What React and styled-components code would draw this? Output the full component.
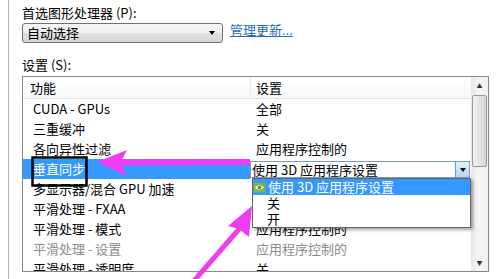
import React from 'react';
import styled, { createGlobalStyle } from 'styled-components';

const GlobalStyle = createGlobalStyle`
  body {
    margin: 0;
    background: #fff;
    font-family: "Noto Sans CJK SC", "Noto Sans", sans-serif;
  }
`;

// values of rows 5 and 6 sit under the open menu, so they stay empty
const rows = [
  { name: 'CUDA - GPUs', value: '全部' },
  { name: '三重缓冲', value: '关' },
  { name: '各向异性过滤', value: '应用程序控制的' },
  { name: '垂直同步', value: '使用 3D 应用程序设置', selected: true },
  { name: '多显示器/混合 GPU 加速', value: '' },
  { name: '平滑处理 - FXAA', value: '' },
  { name: '平滑处理 - 模式', value: '应用程序控制的' },
  { name: '平滑处理 - 设置', value: '应用程序控制的', disabled: true },
  { name: '平滑处理 - 透明度', value: '关' },
];

const options = ['使用 3D 应用程序设置', '关', '开'];

function App() {
  return (
    <Page>
      <GlobalStyle />
      <Frame>
        <Label>首选图形处理器 (P):</Label>
        <TopRow>
          <Combo>
            <span>自动选择</span>
            <Caret />
          </Combo>
          <Link>管理更新...</Link>
        </TopRow>
        <Label2>设置 (S):</Label2>
        <TableBox>
          <List>
            <Header>
              <HeadCell>功能</HeadCell>
              <HeadCell second>设置</HeadCell>
            </Header>
            {rows.map((r, i) => (
              <Row key={i}>
                <NameCell selected={r.selected} disabled={r.disabled}>{r.name}</NameCell>
                {r.selected ? (
                  <ValueCell>
                    <InlineCombo>
                      <span>{r.value}</span>
                      <DropButton><Caret /></DropButton>
                    </InlineCombo>
                    <Menu>
                      {options.map((o, j) => (
                        <MenuItem key={j} active={j === 0}>
                          {j === 0 && <NvIcon />}
                          {o}
                        </MenuItem>
                      ))}
                    </Menu>
                  </ValueCell>
                ) : (
                  <ValueCell disabled={r.disabled}>{r.value}</ValueCell>
                )}
              </Row>
            ))}
          </List>
          <Scrollbar>
            <ScrollButton>▲</ScrollButton>
            <Thumb />
            <Track />
            <ScrollButton>▼</ScrollButton>
          </Scrollbar>
        </TableBox>
      </Frame>
      <Annotations />
    </Page>
  );
}

function NvIcon() {
  return (
    <IconSvg width="13" height="11" viewBox="0 0 13 11">
      <rect x="0.5" y="0.5" width="12" height="10" rx="1.5" fill="#7ab648" />
      <path d="M2 5.5 C4 2.5 8 2.5 11 5.5 C8 8.5 4 8.5 2 5.5 Z" fill="#e8f2dc" />
      <circle cx="6.5" cy="5.5" r="1.8" fill="#5b8f2e" />
    </IconSvg>
  );
}

function Annotations() {
  const pink = '#f03cf0';
  return (
    <Overlay width="504" height="279" viewBox="0 0 504 279">
      <rect x="32.5" y="157.5" width="54" height="28" fill="none" stroke="#000" strokeWidth="2.5" />
      <rect x="258" y="187" width="33" height="23" fill="none" stroke="#000" strokeWidth="3" />
      <polygon points="97,162 127,150 122,159.5 250,159 250,165 122,165.5 127,176" fill={pink} />
      <line x1="193" y1="282" x2="240" y2="228" stroke={pink} strokeWidth="5" />
      <polygon points="252,206 249,237 239,229 228,226" fill={pink} />
    </Overlay>
  );
}

const Page = styled.div`
  position: relative;
  width: 504px;
  height: 279px;
  overflow: hidden;
  font-size: 13px;
  color: #000;
`;

const Frame = styled.div`
  margin-left: 8px;
  height: 279px;
  box-sizing: border-box;
  border-left: 1px solid #b4b4b4;
  padding: 4px 0 0 13px;
`;

const Label = styled.div`
  height: 18px;
  line-height: 18px;
`;

const Label2 = styled(Label)`
  margin-top: 13px;
`;

const TopRow = styled.div`
  display: flex;
  align-items: flex-start;
  margin-top: 1px;
`;

const Combo = styled.div`
  width: 201px;
  height: 20px;
  box-sizing: border-box;
  border: 1px solid #707070;
  border-radius: 3px;
  background: linear-gradient(#f6f6f6, #eeeeee 50%, #e2e2e2 50%, #d6d6d6);
  display: flex;
  align-items: center;
  justify-content: space-between;
  padding: 0 4px 0 4px;
  line-height: 18px;
`;

const Caret = styled.span`
  width: 0;
  height: 0;
  border-left: 3.5px solid transparent;
  border-right: 3.5px solid transparent;
  border-top: 4px solid #000;
  margin-right: 3px;
`;

const Link = styled.span`
  margin-left: 7px;
  margin-top: -1px;
  line-height: 16px;
  color: #1c6dc4;
  text-decoration: underline;
`;

const TableBox = styled.div`
  margin-top: 2px;
  width: 467px;
  height: 196px;
  box-sizing: border-box;
  border: 1px solid #828790;
  display: flex;
  overflow: hidden;
`;

const List = styled.div`
  width: 448px;
  display: flex;
  flex-direction: column;
`;

const Header = styled.div`
  display: grid;
  grid-template-columns: 227px 1fr;
  height: 22px;
  flex: none;
  box-sizing: border-box;
  border-bottom: 1px solid #e3e3e3;
  background: linear-gradient(#ffffff, #f7f8f9);
`;

const HeadCell = styled.div`
  line-height: 21px;
  padding-left: ${p => (p.second ? '5px' : '7px')};
  border-left: ${p => (p.second ? '1px solid #e8e8e8' : 'none')};
`;

const Row = styled.div`
  display: grid;
  grid-template-columns: 227px 1fr;
  height: 20px;
  flex: none;
`;

const NameCell = styled.div`
  padding-left: 10px;
  line-height: 20px;
  white-space: nowrap;
  background: ${p => (p.selected ? '#3399ff' : 'transparent')};
  color: ${p => (p.selected ? '#fff' : p.disabled ? '#8c8c8c' : '#000')};
`;

const ValueCell = styled.div`
  position: relative;
  padding-left: 6px;
  line-height: 20px;
  white-space: nowrap;
  color: ${p => (p.disabled ? '#8c8c8c' : '#000')};
  &:has(> div) {
    padding-left: 0;
  }
`;

const InlineCombo = styled.div`
  margin: 2px 1px 1px 0;
  height: 17px;
  box-sizing: border-box;
  border: 1px solid #7f9db9;
  background: #fff;
  display: flex;
  align-items: center;
  justify-content: space-between;
  padding-left: 1px;
  line-height: 15px;
`;

const DropButton = styled.div`
  width: 14px;
  height: 15px;
  box-sizing: border-box;
  border-left: 1px solid #6f9ac0;
  background: linear-gradient(#e3f1fb, #b5d6ee);
  display: flex;
  align-items: center;
  justify-content: center;
  span {
    margin-right: 0;
  }
`;

const Menu = styled.div`
  position: absolute;
  top: 19px;
  left: 2px;
  width: 219px;
  box-sizing: border-box;
  border: 1px solid #646464;
  background: #fff;
  box-shadow: 2px 2px 3px rgba(0, 0, 0, 0.35);
  z-index: 2;
`;

const MenuItem = styled.div`
  height: 16px;
  line-height: 16px;
  display: flex;
  align-items: center;
  padding-left: ${p => (p.active ? '0' : '14px')};
  background: ${p => (p.active ? '#3399ff' : '#fff')};
  color: ${p => (p.active ? '#fff' : '#000')};
`;

const IconSvg = styled.svg`
  margin: 0 2px 0 0;
  flex: none;
`;

const Scrollbar = styled.div`
  width: 17px;
  display: flex;
  flex-direction: column;
  background: linear-gradient(90deg, #e6e6e6, #f4f4f4 40%, #f0f0f0);
`;

const ScrollButton = styled.div`
  height: 17px;
  flex: none;
  font-size: 6px;
  line-height: 17px;
  text-align: center;
  color: #333;
`;

const Thumb = styled.div`
  height: 72px;
  flex: none;
  margin: 1px 1px 0 1px;
  box-sizing: border-box;
  border: 1px solid #9a9a9a;
  border-radius: 2px;
  background: linear-gradient(90deg, #f2f2f2, #e4e4e4 50%, #d4d4d4);
`;

const Track = styled.div`
  flex: 1;
`;

const Overlay = styled.svg`
  position: absolute;
  left: 0;
  top: 0;
  pointer-events: none;
`;

export default App;
